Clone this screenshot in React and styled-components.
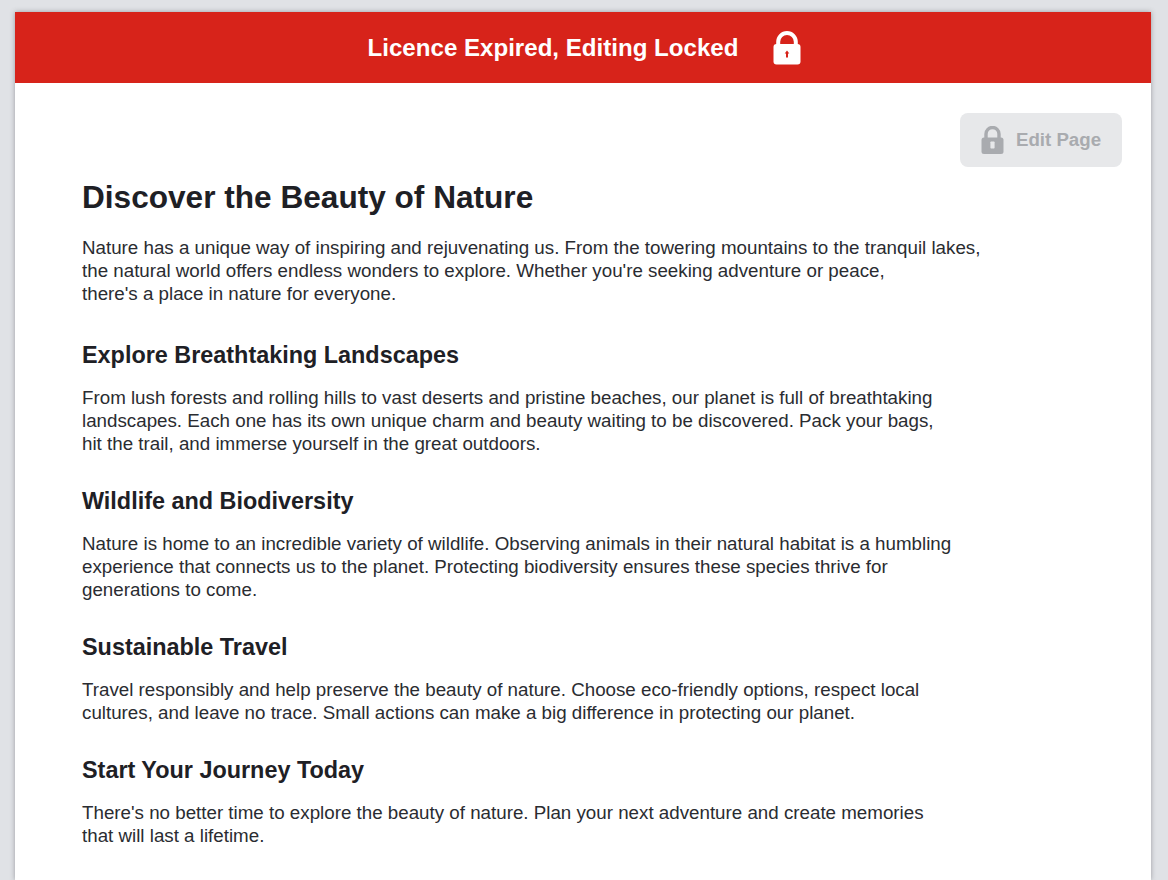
import React from "react";
import styled, { createGlobalStyle } from "styled-components";

const sections = [
  {
    title: "Explore Breathtaking Landscapes",
    lines: [
      "From lush forests and rolling hills to vast deserts and pristine beaches, our planet is full of breathtaking",
      "landscapes. Each one has its own unique charm and beauty waiting to be discovered. Pack your bags,",
      "hit the trail, and immerse yourself in the great outdoors.",
    ],
  },
  {
    title: "Wildlife and Biodiversity",
    lines: [
      "Nature is home to an incredible variety of wildlife. Observing animals in their natural habitat is a humbling",
      "experience that connects us to the planet. Protecting biodiversity ensures these species thrive for",
      "generations to come.",
    ],
  },
  {
    title: "Sustainable Travel",
    lines: [
      "Travel responsibly and help preserve the beauty of nature. Choose eco-friendly options, respect local",
      "cultures, and leave no trace. Small actions can make a big difference in protecting our planet.",
    ],
  },
  {
    title: "Start Your Journey Today",
    lines: [
      "There's no better time to explore the beauty of nature. Plan your next adventure and create memories",
      "that will last a lifetime.",
    ],
  },
];

const intro = [
  "Nature has a unique way of inspiring and rejuvenating us. From the towering mountains to the tranquil lakes,",
  "the natural world offers endless wonders to explore. Whether you're seeking adventure or peace,",
  "there's a place in nature for everyone.",
];

const BannerLock = () => (
  <svg width="28" height="34" viewBox="0 0 28 34" aria-hidden="true">
    <path
      d="M5.2 15V10.8a8.8 8.8 0 0 1 17.6 0V15"
      fill="none"
      stroke="#ffffff"
      strokeWidth="4"
    />
    <rect x="0.5" y="13" width="27" height="20.5" rx="3" fill="#ffffff" />
    <path d="M14 19.5l2.3 2.9h-1.3v4.1h-2v-4.1h-1.3z" fill="#d7231a" />
  </svg>
);

const ButtonLock = () => (
  <svg width="23" height="28" viewBox="0 0 23 28" aria-hidden="true">
    <path
      d="M5 14V8a6.5 6.5 0 0 1 13 0V14"
      fill="none"
      stroke="#a9abaf"
      strokeWidth="3.4"
    />
    <rect x="0.5" y="11.5" width="22" height="16.5" rx="2.5" fill="#a9abaf" />
    <rect x="9.4" y="15.5" width="4.2" height="7" rx="0.8" fill="#e7e8ea" />
  </svg>
);

const App = () => (
  <Page>
    <GlobalStyle />
    <Sheet>
      <Banner>
        <BannerText>Licence Expired, Editing Locked</BannerText>
        <BannerLock />
      </Banner>
      <Content>
        <ButtonRow>
          <EditButton disabled>
            <ButtonLock />
            Edit Page
          </EditButton>
        </ButtonRow>
        <Title>Discover the Beauty of Nature</Title>
        <Intro>
          {intro.map((line) => (
            <Line key={line}>{line}</Line>
          ))}
        </Intro>
        {sections.map((section) => (
          <Section key={section.title}>
            <Heading>{section.title}</Heading>
            <Paragraph>
              {section.lines.map((line) => (
                <Line key={line}>{line}</Line>
              ))}
            </Paragraph>
          </Section>
        ))}
      </Content>
    </Sheet>
  </Page>
);

export default App;

const GlobalStyle = createGlobalStyle`
  html, body {
    margin: 0;
    height: 880px;
    overflow: hidden;
    background: #e0e2e6;
    font-family: "Liberation Sans", Arial, sans-serif;
  }
`;

const Page = styled.div`
  height: 880px;
  padding: 12px 17px 0 15px;
  box-sizing: border-box;
`;

const Sheet = styled.div`
  height: 868px;
  background: #ffffff;
  box-shadow: 0 0 5px rgba(70, 72, 78, 0.45);
`;

const Banner = styled.div`
  height: 71px;
  display: flex;
  align-items: center;
  justify-content: center;
  gap: 35px;
  padding-left: 3px;
  background: #d7231a;
`;

const BannerText = styled.span`
  color: #ffffff;
  font-size: 24.1px;
  font-weight: 700;
`;

const Content = styled.div`
  padding: 30px 29px 0 67px;
`;

const ButtonRow = styled.div`
  display: flex;
  justify-content: flex-end;
`;

const EditButton = styled.button`
  width: 162px;
  height: 54px;
  display: flex;
  align-items: center;
  justify-content: center;
  gap: 12px;
  padding: 0;
  border: none;
  border-radius: 8px;
  background: #e7e8ea;
  color: #a9abaf;
  font-family: inherit;
  font-size: 18.7px;
  font-weight: 700;
`;

const Title = styled.h1`
  margin: 10px 0 19px;
  color: #1e2025;
  font-size: 31.6px;
  line-height: 40px;
  font-weight: 700;
`;

const Paragraph = styled.p`
  margin: 0;
  color: #2a2c31;
  font-size: 18.75px;
  line-height: 23px;
`;

const Intro = styled(Paragraph)`
  margin-bottom: 35px;
`;

const Line = styled.span`
  display: block;
  white-space: nowrap;
`;

const Section = styled.section`
  margin-bottom: 31px;
`;

const Heading = styled.h2`
  margin: 0 0 16px;
  color: #1e2025;
  font-size: 23.4px;
  line-height: 30px;
  font-weight: 700;
`;
